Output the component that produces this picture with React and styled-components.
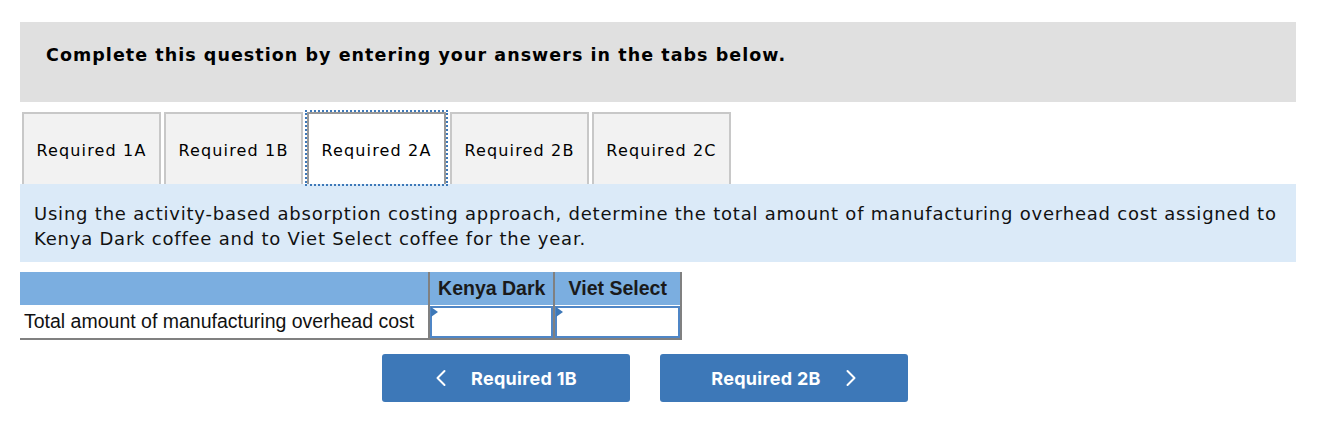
import React, { useState } from 'react';
import styled, { createGlobalStyle } from 'styled-components';

const GlobalStyle = createGlobalStyle`
    body {
        margin: 0;
        background: #ffffff;
        font-family: "DejaVu Sans", Verdana, sans-serif;
    }
`;

const Page = styled.div`
    padding: 22px 48px 0 20px;
`;

const Header = styled.div`
    background: #e0e0e0;
    height: 80px;
    box-sizing: border-box;
    padding: 21px 26px 0;
    font-weight: bold;
    font-size: 17.5px;
    letter-spacing: 1.05px;
    line-height: 24px;
    color: #000;
`;

const TabBar = styled.div`
    display: flex;
    gap: 3px;
    margin-top: 10px;
    padding-left: 2px;
`;

const Tab = styled.button`
    width: 139px;
    height: 72px;
    box-sizing: border-box;
    border: 2px solid ${p => (p.$active ? '#999999' : '#c8c8c8')};
    border-bottom: none;
    background: ${p => (p.$active ? '#ffffff' : '#f2f2f2')};
    font-family: "DejaVu Sans", Verdana, sans-serif;
    font-size: 16px;
    letter-spacing: 1.15px;
    color: #000;
    padding: 2px 0 0;
    margin: ${p => (p.$active ? '0 1px' : '0')};
    outline: ${p => (p.$active ? '2px dotted #3d78b8' : 'none')};
    outline-offset: 0;
    cursor: pointer;
`;

const Prompt = styled.div`
    background: #dbeaf8;
    padding: 17px 14px 11px;
    font-size: 18px;
    letter-spacing: 0.78px;
    line-height: 25px;
    color: #111;
`;

const Table = styled.table`
    margin-top: 10px;
    border-collapse: collapse;
    font-family: "Liberation Sans", Arial, sans-serif;
    font-size: 19.5px;
`;

const HeadCell = styled.th`
    background: #7baee0;
    height: 33px;
    padding: 0;
    font-weight: bold;
    color: #1a1a1a;
    border-left: ${p => (p.$blank ? 'none' : '2px solid #808080')};
    border-right: ${p => (p.$blank ? 'none' : '2px solid #808080')};
    width: ${p => p.$w}px;
    text-align: center;
`;

const LabelCell = styled.td`
    padding: 0 14px 0 4px;
    height: 33px;
    border-bottom: 2px solid #808080;
    color: #111;
    white-space: nowrap;
`;

const InputCell = styled.td`
    padding: 0;
    border: 2px solid #808080;
    border-top: none;
`;

const InputWrap = styled.div`
    position: relative;
    height: 32px;
    box-sizing: border-box;
    border: 2px solid #4f86c6;
    background: #fff;
`;

const Marker = styled.span`
    position: absolute;
    left: -1px;
    top: -1px;
    width: 0;
    height: 0;
    border-top: 5px solid transparent;
    border-bottom: 5px solid transparent;
    border-left: 7px solid #3d78b8;
`;

const Field = styled.input`
    width: 100%;
    height: 100%;
    border: none;
    outline: none;
    box-sizing: border-box;
    background: transparent;
    font-size: 16px;
    text-align: right;
`;

const NavRow = styled.div`
    display: flex;
    gap: 30px;
    margin-top: 14px;
    padding-left: 362px;
`;

const NavButton = styled.button`
    width: 248px;
    height: 48px;
    background: #3d78b8;
    border: none;
    border-radius: 3px;
    color: #fff;
    font-family: Inter, Roboto, sans-serif;
    font-weight: 700;
    font-size: 18px;
    letter-spacing: 0.3px;
    display: flex;
    align-items: center;
    justify-content: center;
    gap: 24px;
    cursor: pointer;
`;

const Chevron = ({ dir }) => (
    <svg width="12" height="18" viewBox="0 0 12 18" fill="none">
        <path
            d={dir === 'left' ? 'M9.5 2 L2.5 9 L9.5 16' : 'M2.5 2 L9.5 9 L2.5 16'}
            stroke="#fff"
            strokeWidth="2"
            strokeLinecap="round"
            strokeLinejoin="round"
        />
    </svg>
);

const tabs = ['Required 1A', 'Required 1B', 'Required 2A', 'Required 2B', 'Required 2C'];

function App() {
    const [active, setActive] = useState(2);
    const [values, setValues] = useState({ kenya: '', viet: '' });

    return (
        <Page>
            <GlobalStyle />
            <Header>Complete this question by entering your answers in the tabs below.</Header>
            <TabBar>
                {tabs.map((t, i) => (
                    <Tab key={t} $active={i === active} onClick={() => setActive(i)}>
                        {t}
                    </Tab>
                ))}
            </TabBar>
            <Prompt>
                Using the activity-based absorption costing approach, determine the total amount of manufacturing overhead cost assigned to Kenya Dark coffee and to Viet Select coffee for the year.
            </Prompt>
            <Table>
                <thead>
                    <tr>
                        <HeadCell $blank />
                        <HeadCell $w={123}>Kenya Dark</HeadCell>
                        <HeadCell $w={125}>Viet Select</HeadCell>
                    </tr>
                </thead>
                <tbody>
                    <tr>
                        <LabelCell>Total amount of manufacturing overhead cost</LabelCell>
                        <InputCell>
                            <InputWrap>
                                <Marker />
                                <Field
                                    value={values.kenya}
                                    onChange={e => setValues({ ...values, kenya: e.target.value })}
                                />
                            </InputWrap>
                        </InputCell>
                        <InputCell>
                            <InputWrap>
                                <Marker />
                                <Field
                                    value={values.viet}
                                    onChange={e => setValues({ ...values, viet: e.target.value })}
                                />
                            </InputWrap>
                        </InputCell>
                    </tr>
                </tbody>
            </Table>
            <NavRow>
                <NavButton onClick={() => setActive(1)}>
                    <Chevron dir="left" />
                    Required 1B
                </NavButton>
                <NavButton onClick={() => setActive(3)}>
                    Required 2B
                    <Chevron dir="right" />
                </NavButton>
            </NavRow>
        </Page>
    );
}

export default App;
